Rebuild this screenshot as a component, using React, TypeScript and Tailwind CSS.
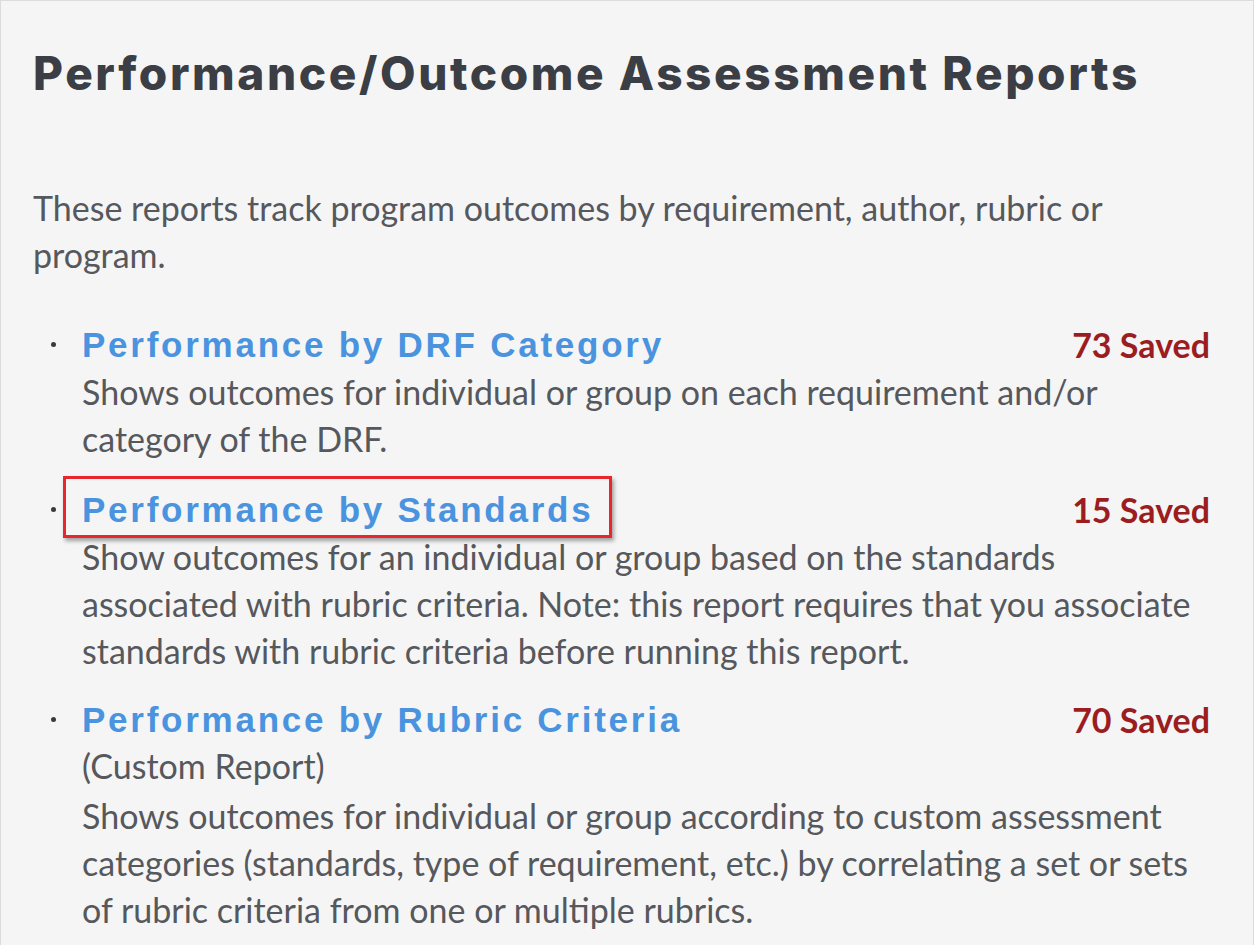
import React from "react";

const body = { fontFamily: "Lato, 'Open Sans', sans-serif" };

function Bullet() {
  return (
    <div className="w-[49px] shrink-0 h-[47px] flex items-center pl-[18px]">
      <span className="block w-[5px] h-[5px] rounded-full bg-[#3a3a3a]" />
    </div>
  );
}

function LinkTitle({ children, boxed }: { children: React.ReactNode; boxed?: boolean }) {
  return (
    <span className="relative inline-block">
      <span
        className="text-[35px] font-bold tracking-[2.75px] text-[#4a93df] leading-[47px]"
        style={{ fontFamily: "'Liberation Sans', Arial, sans-serif" }}
      >
        {children}
      </span>
      {boxed && (
        <span className="absolute left-[-19px] right-[-19px] top-[-10px] bottom-[-5px] border-[3px] border-[#e8262b] shadow-[2px_3px_4px_rgba(0,0,0,0.35)] pointer-events-none" />
      )}
    </span>
  );
}

function Saved({ n }: { n: number }) {
  return (
    <span className="text-[34px] font-bold text-[#9b1d1f] leading-[47px]" style={body}>
      {n} Saved
    </span>
  );
}

export default function App() {
  return (
    <div className="min-h-screen w-full bg-[#f5f5f5] border-t border-l border-r border-[#dcdcdc] pl-[32px] pr-[43px] pt-[42px]">
      <h1
        className="text-[46px] font-extrabold leading-[60px] text-[#3b3e44] tracking-[2.6px]"
        style={{ fontFamily: "Inter, 'Open Sans', sans-serif" }}
      >
        Performance/Outcome Assessment Reports
      </h1>
      <p className="mt-[81px] text-[34px] leading-[47px] text-[#55585c]" style={body}>
        These reports track program outcomes by requirement, author, rubric or program.
      </p>
      <ul className="mt-[43px]" style={body}>
        <li className="flex">
          <Bullet />
          <div className="flex-1">
            <div className="flex justify-between items-center">
              <LinkTitle>Performance by DRF Category</LinkTitle>
              <Saved n={73} />
            </div>
            <p className="text-[34px] leading-[47px] text-[#55585c]">
              Shows outcomes for individual or group on each requirement and/or category of the DRF.
            </p>
          </div>
        </li>
        <li className="flex mt-[24px]">
          <Bullet />
          <div className="flex-1">
            <div className="flex justify-between items-center">
              <LinkTitle boxed>Performance by Standards</LinkTitle>
              <Saved n={15} />
            </div>
            <p className="text-[34px] leading-[47px] text-[#55585c]">
              Show outcomes for an individual or group based on the standards associated with rubric criteria. Note: this report requires that you associate standards with rubric criteria before running this report.
            </p>
          </div>
        </li>
        <li className="flex mt-[22px]">
          <Bullet />
          <div className="flex-1">
            <div className="flex justify-between items-center">
              <LinkTitle>Performance by Rubric Criteria</LinkTitle>
              <Saved n={70} />
            </div>
            <p className="text-[34px] leading-[46px] text-[#55585c]">(Custom Report)</p>
            <p className="mt-[3px] text-[34px] leading-[47px] text-[#55585c]">
              Shows outcomes for individual or group according to custom assessment categories (standards, type of requirement, etc.) by correlating a set or sets of rubric criteria from one or multiple rubrics.
            </p>
          </div>
        </li>
      </ul>
    </div>
  );
}
